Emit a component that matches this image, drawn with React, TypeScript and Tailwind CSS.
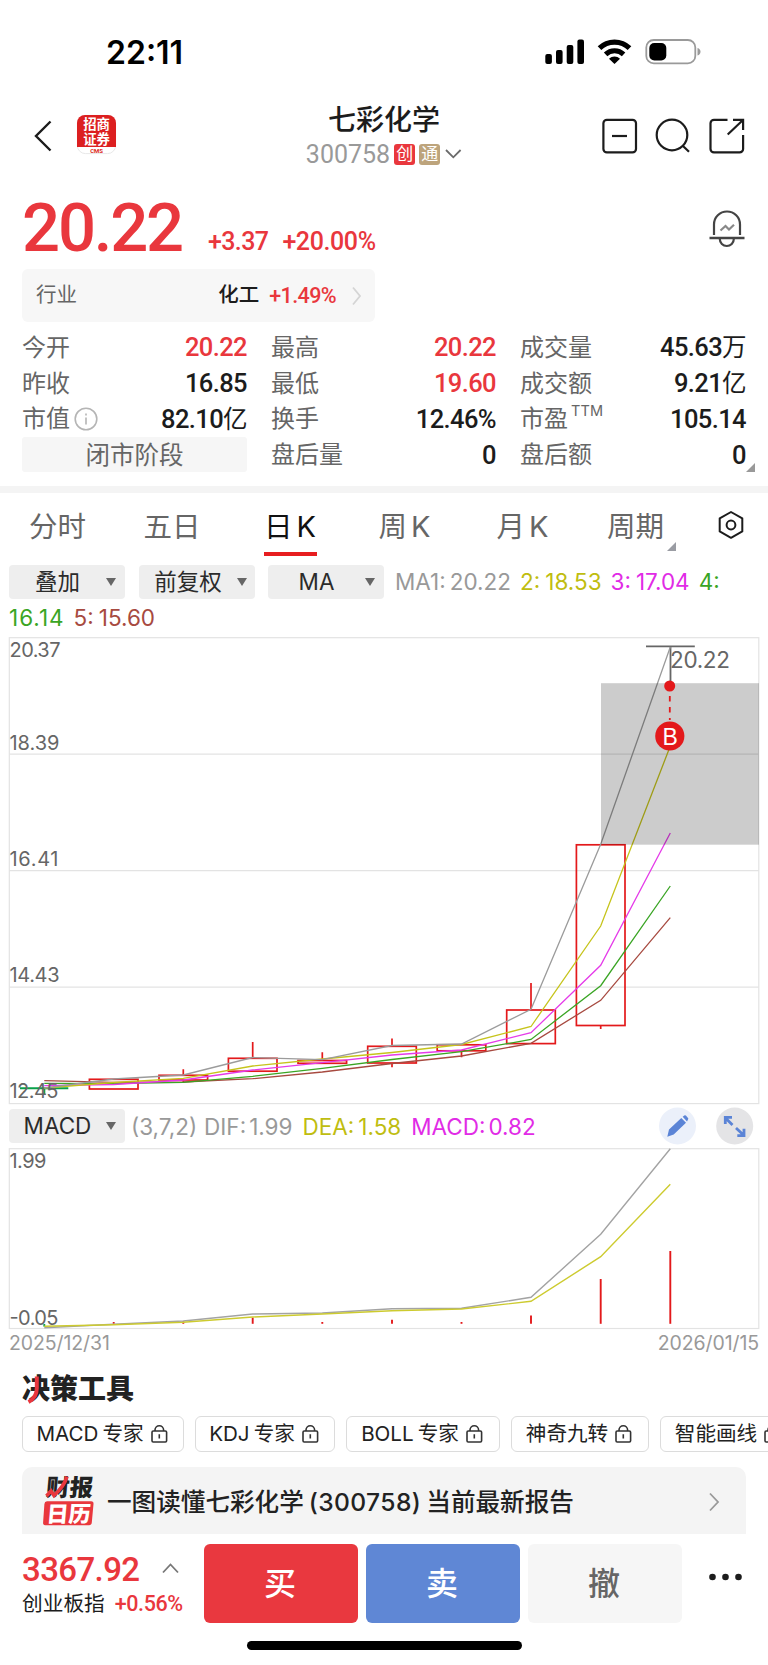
import React from 'react';
import clsx from 'clsx';

const INTER = "font-['Inter','Noto_Sans_CJK_SC',sans-serif]";
const DIN = "font-['Roboto','Noto_Sans_CJK_SC',sans-serif]";

interface Stat {
  label: string;
  value: string;
  unit?: string;
  up?: boolean;
}

interface Candle {
  top: number;
  bottom: number;
  high: number;
  low: number;
}

const statColumns: { className: string; rows: Stat[] }[] = [
  {
    className: 'w-[225px]',
    rows: [
      { label: '今开', value: '20.22', up: true },
      { label: '昨收', value: '16.85' },
      { label: '市值', value: '82.10', unit: '亿' },
    ],
  },
  {
    className: 'w-[225px]',
    rows: [
      { label: '最高', value: '20.22', up: true },
      { label: '最低', value: '19.60', up: true },
      { label: '换手', value: '12.46%' },
      { label: '盘后量', value: '0' },
    ],
  },
  {
    className: 'w-[226px]',
    rows: [
      { label: '成交量', value: '45.63', unit: '万' },
      { label: '成交额', value: '9.21', unit: '亿' },
      { label: '市盈', value: '105.14' },
      { label: '盘后额', value: '0' },
    ],
  },
];

const tabs = [
  { label: '分时', className: 'w-[115px]' },
  { label: '五日', className: 'w-[114px]' },
  { label: '日K', className: 'w-[122px]', active: true },
  { label: '周K', className: 'w-[107px]' },
  { label: '月K', className: 'w-[129px]' },
  { label: '周期', className: 'w-[97px]', more: true },
];

const tools = [
  { label: 'MACD', cn: '专家', className: 'w-[162px]' },
  { label: 'KDJ', cn: '专家', className: 'w-[140px]' },
  { label: 'BOLL', cn: '专家', className: 'w-[154px]' },
  { label: '', cn: '神奇九转', className: 'w-[138px]' },
  { label: '', cn: '智能画线', className: 'w-[138px]' },
];

// x of every trading day
const xs = [44.3, 113.7, 183.3, 252.7, 322.3, 392, 461.5, 531, 600.7, 670.3];

const candles: (Candle | null)[] = [
  null,
  { top: 1079.3, bottom: 1089, high: 1079, low: 1089 },
  { top: 1075.3, bottom: 1080, high: 1069.3, low: 1083 },
  { top: 1058.3, bottom: 1071.2, high: 1042, low: 1071 },
  { top: 1060.5, bottom: 1063.3, high: 1052.3, low: 1063 },
  { top: 1046.3, bottom: 1063, high: 1038.5, low: 1067.3 },
  { top: 1044.8, bottom: 1050.8, high: 1044, low: 1057.3 },
  { top: 1010, bottom: 1043.6, high: 983, low: 1043 },
  { top: 844.8, bottom: 1025.5, high: 844, low: 1029 },
  null,
];

const maLines = [
  { color: '#a74a40', ys: [1080.7, 1082.3, 1082, 1078.7, 1072, 1063.5, 1056, 1043.3, 1000.3, 917.7] },
  { color: '#3aa524', ys: [1083.3, 1083.7, 1082.3, 1076.3, 1068.3, 1059.5, 1051.7, 1039.5, 985.7, 886] },
  { color: '#e53be9', ys: [1085.7, 1084.5, 1080, 1070, 1062.7, 1055, 1050, 1032.7, 965.3, 833] },
  { color: '#c6c41c', ys: [1088, 1082.5, 1078.3, 1066, 1059, 1052.5, 1044.5, 1026.5, 926, 746] },
  { color: '#9b9b9b', ys: [1088, 1079, 1075, 1057.5, 1059.7, 1045.5, 1044, 1009.3, 844.3, 647] },
];

const macdLines = [
  { color: '#a3a3a3', ys: [1327.7, 1324.3, 1321, 1314, 1313, 1308.8, 1308.3, 1297.3, 1234.3, 1148.7] },
  { color: '#cdcb2f', ys: [1326.3, 1324.7, 1322.3, 1317, 1314, 1310.7, 1309, 1301.3, 1256.7, 1184.3] },
];

const macdBars = [1326.6, 1322, 1321.3, 1317.6, 1322, 1319.8, 1322, 1315.5, 1279, 1251];

const toPoints = (ys: number[]) => ys.map((y, i) => `${xs[i]},${y}`).join(' ');

const StatusBar = () => (
  <div className="h-[100px] pl-[106px] pr-[67px] pt-[34px] flex justify-between">
    <span className={clsx(INTER, 'h-9 mt-[1px] leading-9 text-[32px] font-semibold text-black')}>22:11</span>
    <svg width="158" height="36" viewBox="543 34 158 36" className="h-9">
      <rect x="545.3" y="54" width="6.6" height="10" rx="2" />
      <rect x="556" y="50" width="6.6" height="14" rx="2" />
      <rect x="566.7" y="45" width="6.6" height="19" rx="2" />
      <rect x="577.4" y="39.5" width="6.6" height="24.5" rx="2" />
      <path d="M599.5 48.2 A21.5 21.5 0 0 1 629.5 48.2" fill="none" stroke="#000" strokeWidth="5.2" />
      <path d="M605.6 54.4 A13 13 0 0 1 623.6 54.4" fill="none" stroke="#000" strokeWidth="5" />
      <path d="M614.5 64 L609 58.7 A8 8 0 0 1 620 58.7 Z" />
      <rect x="646.3" y="40" width="49" height="23.4" rx="7.5" fill="none" stroke="#9a9a9a" strokeWidth="1.8" />
      <rect x="649.3" y="43" width="17" height="17.4" rx="5" />
      <path d="M697.5 48 q3 1 3 3.8 q0 2.8 -3 3.8 z" fill="#9a9a9a" />
    </svg>
  </div>
);

const Header = () => (
  <div className="h-[80px] flex items-start justify-between">
    <div className="w-[230px] flex pl-[32px] pt-[15px]">
      <svg width="22" height="40" viewBox="32 115 22 40" fill="none" stroke="#1c1c1c" strokeWidth="2.4">
        <path d="M50.5 121.5 L36 136 L50.5 150.5" />
      </svg>
      <svg width="40" height="40" viewBox="77 115 40 40" className="ml-[23px] overflow-visible">
        <rect x="77.4" y="115.4" width="38.2" height="38.2" rx="8" fill="#fff" stroke="#e8e8e8" />
        <path d="M77 147 V123 a8 8 0 0 1 8 -8 H108 a8 8 0 0 1 8 8 V147 Z" fill="#dc1f20" />
        <g className="font-['Noto_Sans_CJK_SC',sans-serif]" fill="#fff" fontSize="13.4" fontWeight="700" textAnchor="middle">
          <text x="96.6" y="129.2">招商</text>
          <text x="96.6" y="143.6">证券</text>
        </g>
        <text x="96.6" y="152.5" className="font-['Roboto',sans-serif]" fontSize="6" fontWeight="700" fill="#dc1f20" textAnchor="middle">CMS</text>
      </svg>
    </div>
    <div className="flex flex-col items-center pt-[4px]">
      <h1 className={clsx(INTER, 'h-[32px] leading-[33px] text-[28px] font-medium text-[#1c1c1c]')}>七彩化学</h1>
      <div className="mt-[6px] h-[24px] flex items-center gap-[4px]">
        <span className={clsx(DIN, 'leading-none text-[25px] text-[#999]')}>300758</span>
        <span className={clsx(INTER, 'w-[21px] h-[21px] rounded-[3px] bg-[#e9373d] text-white text-[17px] leading-[21px] text-center')}>创</span>
        <span className={clsx(INTER, 'w-[21px] h-[21px] rounded-[3px] bg-[#bda47c] text-white text-[17px] leading-[21px] text-center')}>通</span>
        <svg width="18" height="12" viewBox="0 0 18 12" fill="none" stroke="#6b6b6b" strokeWidth="1.8">
          <path d="M2 2 L9.3 9.3 L16.6 2" />
        </svg>
      </div>
    </div>
    <div className="w-[230px] flex justify-end pr-[22px] pt-[17px]">
      <svg width="146" height="38" viewBox="600 117 146 38" fill="none" stroke="#1c1c1c" strokeWidth="2.2">
        <rect x="603.4" y="119.8" width="32.6" height="32.6" rx="3.5" />
        <path d="M612 136 H627" />
        <circle cx="672" cy="135" r="15.3" />
        <path d="M682.7 145.8 L689 151.8" />
        <path d="M727.5 119.8 H714 a3.5 3.5 0 0 0 -3.5 3.5 V148.9 a3.5 3.5 0 0 0 3.5 3.5 H739.6 a3.5 3.5 0 0 0 3.5 -3.5 V135" />
        <path d="M733 119.8 H743.1 V130" />
        <path d="M743 120 L727.7 134.5" />
      </svg>
    </div>
  </div>
);

const Price = () => (
  <div className="h-[88px] pl-[22px] pr-[22px] flex justify-between text-[#e9373d]">
    <div className={clsx(DIN, 'flex font-medium')}>
      <span className="mt-[14px] text-[67px] leading-[68px] tracking-[-2.2px]">20.22</span>
      <span className="ml-[26px] mt-[49px] text-[25px] leading-[26px] tracking-[-0.6px]">+3.37</span>
      <span className="ml-[14px] mt-[49px] text-[25px] leading-[26px] tracking-[-0.4px]">+20.00%</span>
    </div>
    <svg width="38" height="40" viewBox="708 209 38 40" fill="none" stroke="#444" strokeWidth="2.2" className="mt-[29px]">
      <path d="M714 235 V224.5 a13 13 0 0 1 26 0 V235" />
      <path d="M709.5 238 H744.5" strokeWidth="2.6" />
      <path d="M719.8 239 a7 7 0 0 0 14 0" />
      <path d="M720.5 230.5 L725.5 226 L729 229.5 L734 224.8" stroke="#888" />
    </svg>
  </div>
);

const Industry = () => (
  <div className={clsx(INTER, 'ml-[22px] mt-[1px] w-[353px] h-[53px] rounded-[6px] bg-[#f7f7f7] pl-[14px] pr-[13px] flex items-center text-[20.5px] leading-none')}>
    <span className="flex-1 text-[#666]">行业</span>
    <span className="text-[#1c1c1c] font-medium">化工</span>
    <span className={clsx(DIN, 'ml-[10px] text-[21.5px] font-medium tracking-[-0.6px] text-[#e9373d]')}>+1.49%</span>
    <svg width="11" height="20" viewBox="0 0 11 20" fill="none" stroke="#d5d5d5" strokeWidth="1.8" className="ml-[15px]">
      <path d="M2 1.5 L9 10 L2 18.5" />
    </svg>
  </div>
);

const StatRow: React.FC<Stat> = ({ label, value, unit, up }) => (
  <div className="h-[35.8px] flex items-center justify-between leading-none">
    <span className={clsx(INTER, 'flex items-center text-[24px] text-[#666]')}>
      {label}
      {label === '市值' && (
        <svg width="24" height="24" viewBox="0 0 24 24" fill="none" stroke="#b5b5b5" strokeWidth="1.6" className="ml-[4px]">
          <circle cx="12" cy="12" r="10.8" />
          <path d="M12 10.5 V17.5 M12 6.5 V8.5" />
        </svg>
      )}
      {label === '市盈' && <span className="ml-[3px] mb-[16px] text-[14.5px] tracking-[0.1px]">TTM</span>}
    </span>
    <span className={clsx(DIN, 'text-[25.5px] font-medium tracking-[-0.6px]', up ? 'text-[#e9373d]' : 'text-[#1c1c1c]')}>
      {value}
      {unit && <span className="text-[24.5px] font-normal">{unit}</span>}
    </span>
  </div>
);

const Stats = () => (
  <div className="mt-[8px] h-[156px] pl-[22px] flex gap-[24px]">
    {statColumns.map((col, i) => (
      <div key={i} className={clsx(col.className, i === 2 && 'relative')}>
        {col.rows.map(row => <StatRow key={row.label} {...row} />)}
        {i === 0 && (
          <div className={clsx(INTER, 'h-[35px] rounded-[3px] bg-[#f6f6f6] text-center text-[24.5px] leading-[36px] text-[#666]')}>闭市阶段</div>
        )}
        {i === 2 && (
          <svg width="9" height="9" viewBox="0 0 9 9" className="absolute right-[-9px] top-[133px]">
            <path d="M9 0 V9 H0 Z" fill="#999" />
          </svg>
        )}
      </div>
    ))}
  </div>
);

const Tabs = () => (
  <div className={clsx(INTER, 'h-[71px] flex')}>
    {tabs.map(tab => (
      <div key={tab.label} className={clsx(tab.className, 'relative flex flex-col items-center pt-[17px]')}>
        <span className={clsx('flex gap-[4px] h-[34px] leading-[34px] text-[28.5px]', tab.active ? 'text-[#111]' : 'text-[#666]')}>
          {tab.label.endsWith('K') ? <>{tab.label[0]}<span className="text-[29px]">K</span></> : tab.label}
        </span>
        {tab.active && <div className="mt-[8px] w-[53px] h-[4px] bg-[#e71d20]" />}
        {tab.more && (
          <svg width="9" height="9" viewBox="0 0 9 9" className="absolute right-[8px] top-[49px]">
            <path d="M9 0 V9 H0 Z" fill="#9a9ca3" />
          </svg>
        )}
      </div>
    ))}
    <svg width="28" height="30" viewBox="0 0 28 30" fill="none" stroke="#1c1c1c" strokeWidth="2" className="ml-[33px] mt-[17px]">
      <path d="M14 2 L25.3 8.4 V21.4 L14 27.8 L2.7 21.4 V8.4 Z" strokeLinejoin="round" />
      <circle cx="14" cy="15" r="4.4" />
    </svg>
  </div>
);

const Dropdown: React.FC<{ label: string; className: string }> = ({ label, className }) => (
  <button className={clsx('h-[34px] w-[116px] shrink-0 rounded-[4px] bg-[#eee] flex items-center text-[22.5px] leading-none text-[#2b2b2b]', className)}>
    <span className="flex-1 text-center">{label}</span>
    <svg width="10" height="8" viewBox="0 0 10 8"><path d="M0 0 H10 L5 8 Z" fill="#666" /></svg>
  </button>
);

const MaBar = () => (
  <div className={clsx(INTER, 'h-[73px] pl-[9px] pt-[1px] text-[22.5px] leading-none')}>
    <div className="flex items-center h-[34px]">
      <Dropdown label="叠加" className="pr-[9px]" />
      <Dropdown label="前复权" className="ml-[14px] pr-[8px]" />
      <Dropdown label="MA" className="ml-[13px] pr-[9px]" />
      <span className="ml-[11px] text-[#999]">MA1:<span className="ml-[4px]">20.22</span></span>
      <span className="ml-[9px] text-[#bfbd10]">2:<span className="ml-[5px]">18.53</span></span>
      <span className="ml-[9px] text-[#e12be6]">3:<span className="ml-[5px]">17.04</span></span>
      <span className="ml-[9px] text-[#3aa524]">4:</span>
    </div>
    <div className="flex items-center mt-[3px] h-[32px]">
      <span className="text-[#3aa524] tracking-[1px]">16.14</span>
      <span className="ml-[9px] text-[#a74a40]">5:<span className="ml-[5px]">15.60</span></span>
    </div>
  </div>
);

const KLineChart = () => (
  <svg width="768" height="468" viewBox="0 637 768 468" className="block">
    <g fill="none" stroke="#e3e3e3" strokeWidth="1.2">
      <rect x="9.3" y="637.7" width="749.5" height="465.9" />
      <path d="M9 754.2 H759 M9 870.6 H759 M9 987.2 H759" />
    </g>
    <g fill="none" stroke="#e3191b" strokeWidth="1.7">
      {candles.map((c, i) => c && (
        <g key={i}>
          <path d={`M${xs[i]} ${c.high} V${c.top} M${xs[i]} ${c.bottom} V${c.low}`} />
          <rect x={xs[i] - 24.3} y={c.top} width="48.6" height={c.bottom - c.top} />
        </g>
      ))}
    </g>
    <path d="M20 1088.2 H68.3 M44.3 1088 V1095" stroke="#0aa14a" strokeWidth="2" />
    <path d="M646 646.4 H694.8 M670.5 646 V682" stroke="#666" strokeWidth="1.8" />
    {maLines.map(line => (
      <polyline key={line.color} points={toPoints(line.ys)} fill="none" stroke={line.color} strokeWidth="1.3" />
    ))}
    <rect x="601" y="683.2" width="158" height="161.5" fill="#000" fillOpacity="0.2" />
    <path d="M669.8 696 V720" stroke="#e3191b" strokeWidth="1.8" strokeDasharray="5.5 5.5" />
    <circle cx="669.7" cy="686" r="5.5" fill="#e3191b" />
    <circle cx="669.8" cy="736" r="14.6" fill="#e3191b" />
    <g className="font-['Inter',sans-serif]" fill="#666" fontSize="20">
      <text x="670.2" y="744.6" className="font-['Liberation_Sans',sans-serif]" fontSize="23" fill="#fff" textAnchor="middle">B</text>
      <text x="670" y="667.5" fontSize="22.5" textLength="60">20.22</text>
      <text x="9.5" y="656.5" textLength="51">20.37</text>
      <text x="9.5" y="749.5" textLength="50">18.39</text>
      <text x="9.5" y="866" textLength="49">16.41</text>
      <text x="9.5" y="982.3" textLength="50">14.43</text>
      <text x="9.5" y="1098.3" textLength="49">12.45</text>
    </g>
  </svg>
);

const MacdBar = () => (
  <div className={clsx(INTER, 'h-[43px] pl-[9px] pt-[4px] flex items-start text-[22.5px]')}>
    <Dropdown label="MACD" className="pr-[9px]" />
    <div className="flex leading-[36px]">
      <span className="ml-[6px] text-[#999]">(3,7,2)</span>
      <span className="ml-[7px] text-[#999]">DIF:<span className="ml-[3px]">1.99</span></span>
      <span className="ml-[10px] text-[#bfbd10]">DEA:<span className="ml-[4px]">1.58</span></span>
      <span className="ml-[10px] text-[#e12be6]">MACD:<span className="ml-[3px]">0.82</span></span>
    </div>
    <svg width="96" height="38" viewBox="658 1107 96 38" className="ml-auto mr-[14px] mt-[-2px]">
      <circle cx="677.5" cy="1126" r="18.5" fill="#ebf0fa" />
      <circle cx="734.7" cy="1126" r="18.5" fill="#e4e4e6" />
      <path d="M667.3 1136.7 L669 1129.5 L681.3 1118 L686 1122.8 L673.7 1134.5 Z M682.7 1116.8 L684.3 1115.4 q0.8 -0.6 1.6 0.2 L688 1118 q0.7 0.8 0 1.6 L687 1121.4 Z" fill="#5b84d6" />
      <g fill="none" stroke="#5b84d6" strokeWidth="2.8">
        <path d="M732.5 1125 L725.5 1118 M725.3 1124 V1117.3 H732" />
        <path d="M736 1128 L743.5 1135 M744 1128.8 V1135.6 H737.3" />
      </g>
    </svg>
  </div>
);

const MacdChart = () => (
  <svg width="768" height="182" viewBox="0 1148 768 182" className="block">
    <rect x="9.3" y="1148.7" width="749.5" height="179.8" fill="none" stroke="#e3e3e3" strokeWidth="1.2" />
    {macdBars.map((top, i) => (
      <path key={i} d={`M${xs[i]} ${i === 0 ? 1324 : 1323.8} V${top}`} stroke={i === 0 ? '#0aa14a' : '#e3191b'} strokeWidth="1.9" />
    ))}
    {macdLines.map(line => (
      <polyline key={line.color} points={toPoints(line.ys)} fill="none" stroke={line.color} strokeWidth="1.4" />
    ))}
    <g className="font-['Inter',sans-serif]" fill="#666" fontSize="20">
      <text x="9.5" y="1167.5" textLength="37">1.99</text>
      <text x="9.5" y="1324.6" textLength="49">-0.05</text>
    </g>
  </svg>
);

const LockIcon = () => (
  <svg width="17" height="20" viewBox="0 0 17 20" fill="none" stroke="#333" strokeWidth="1.6">
    <rect x="1" y="7" width="14.6" height="11" rx="1.2" />
    <path d="M4 7 V6 a4.3 4.3 0 0 1 8.6 0 V7 M8.3 10.3 V14.6" />
  </svg>
);

const DecisionTools = () => (
  <div className={clsx(INTER, 'h-[109px] pl-[22px] overflow-hidden')}>
    <h2 className="relative mt-[16px] h-[30px] leading-[30px] w-[120px] text-[28px] font-black text-[#222]">
      决策工具
      <svg width="14" height="30" viewBox="0 0 14 30" fill="none" className="absolute left-[5px] top-[1px]">
        <path d="M9.8 1.5 V13 C9.8 20 7.5 24 1.5 27" stroke="#e9373d" strokeWidth="4" />
      </svg>
    </h2>
    <div className="mt-[12px] flex gap-[11px] w-[900px]">
      {tools.map(tool => (
        <div key={tool.cn + tool.label} className={clsx(tool.className, 'h-[36px] pr-[2px] rounded-[6px] border border-[#dcdcdc] flex items-center justify-center leading-none text-[20.6px] text-[#222]')}>
          {tool.label && <span className="mr-[4px]">{tool.label}</span>}
          <span className="mr-[7px]">{tool.cn}</span>
          <LockIcon />
        </div>
      ))}
    </div>
  </div>
);

const ReportBanner = () => (
  <div className={clsx(INTER, 'mx-[22px] h-[67px] rounded-t-[10px] bg-[#f4f4f4] pl-[20px] pr-[26px] flex items-center')}>
    <svg width="54" height="54" viewBox="42 1476 54 54" className="shrink-0 mt-[1px] overflow-visible">
      <g className="font-['Noto_Sans_CJK_SC',sans-serif]" fontWeight="900" fontSize="23.5">
        <text transform="translate(45.5 1498.3) skewX(-5)" fill="#222">财报</text>
        <path d="M46.5 1498 L51 1493 L54 1497.5 C60 1492 65 1486 67 1478.5" fill="none" stroke="#e9373d" strokeWidth="3.6" />
        <path d="M47 1503.3 H91 a2.5 2.5 0 0 1 2.5 2.8 L91.8 1524.5 a3 3 0 0 1 -3 2.8 H45.5 a2.5 2.5 0 0 1 -2.4 -2.8 L44.4 1506 a3 3 0 0 1 2.6 -2.7 Z" fill="#e9373d" />
        <text transform="translate(46 1523.6) skewX(-5)" fill="#fff" fontSize="22">日历</text>
      </g>
    </svg>
    <span className="ml-[11px] mt-[3px] flex-1 text-[24.6px] font-medium leading-none text-[#222] whitespace-nowrap">
      一图读懂七彩化学<span className="mx-[5px] tracking-[0.4px]">(300758)</span>当前最新报告
    </span>
    <svg width="12" height="20" viewBox="0 0 12 20" fill="none" stroke="#999" strokeWidth="1.8" className="mt-[2px]">
      <path d="M2 1.5 L10 10 L2 18.5" />
    </svg>
  </div>
);

const TradeBar = () => (
  <div className={clsx(INTER, 'pl-[22px] pt-[10px] h-[90px] flex')}>
    <div className="w-[182px] pt-[9px]">
      <div className="flex items-center h-[33px]">
        <span className={clsx(DIN, 'text-[33px] leading-none font-medium tracking-[-0.6px] text-[#e9373d]')}>3367.92</span>
        <svg width="17" height="11" viewBox="0 0 17 11" fill="none" stroke="#777" strokeWidth="1.8" className="ml-[22px] mb-[3px]">
          <path d="M1 9.5 L8.5 1.5 L16 9.5" />
        </svg>
      </div>
      <div className="mt-[5px] flex items-center h-[26px] text-[20.7px] leading-none text-[#1c1c1c]">
        创业板指
        <span className={clsx(DIN, 'ml-[10px] text-[21.5px] font-medium tracking-[-0.4px] text-[#e9373d]')}>+0.56%</span>
      </div>
    </div>
    <div className="flex gap-[8px] text-[32px] leading-[79px] text-center font-medium">
      <button className="w-[154px] h-[79px] pr-[2px] rounded-[6px] bg-[#e9383f] text-white">买</button>
      <button className="w-[154px] h-[79px] pr-[2px] rounded-[6px] bg-[#5f87d5] text-white">卖</button>
      <button className="w-[154px] h-[79px] pr-[2px] rounded-[6px] bg-[#f6f6f6] text-[#666]">撤</button>
    </div>
    <svg width="34" height="8" viewBox="0 0 34 8" fill="#1c1c1c" className="ml-[27px] mt-[29px]">
      <circle cx="3.5" cy="4" r="3.3" />
      <circle cx="16.5" cy="4" r="3.3" />
      <circle cx="29.5" cy="4" r="3.3" />
    </svg>
  </div>
);

const App: React.FC = () => {
  return (
    <div className="w-[768px] h-[1665px] overflow-hidden bg-white">
      <StatusBar />
      <Header />
      <Price />
      <Industry />
      <Stats />
      <div className="h-[7px] bg-[#f4f4f4]" />
      <Tabs />
      <MaBar />
      <KLineChart />
      <MacdBar />
      <MacdChart />
      <div className={clsx(INTER, 'h-[28px] px-[9px] flex items-center justify-between text-[19.5px] tracking-[-0.1px] leading-none text-[#999]')}>
        <span>2025/12/31</span>
        <span>2026/01/15</span>
      </div>
      <DecisionTools />
      <ReportBanner />
      <TradeBar />
      <div className="mx-auto mt-[17px] w-[275px] h-[9px] rounded-full bg-black" />
    </div>
  );
};

export default App;
